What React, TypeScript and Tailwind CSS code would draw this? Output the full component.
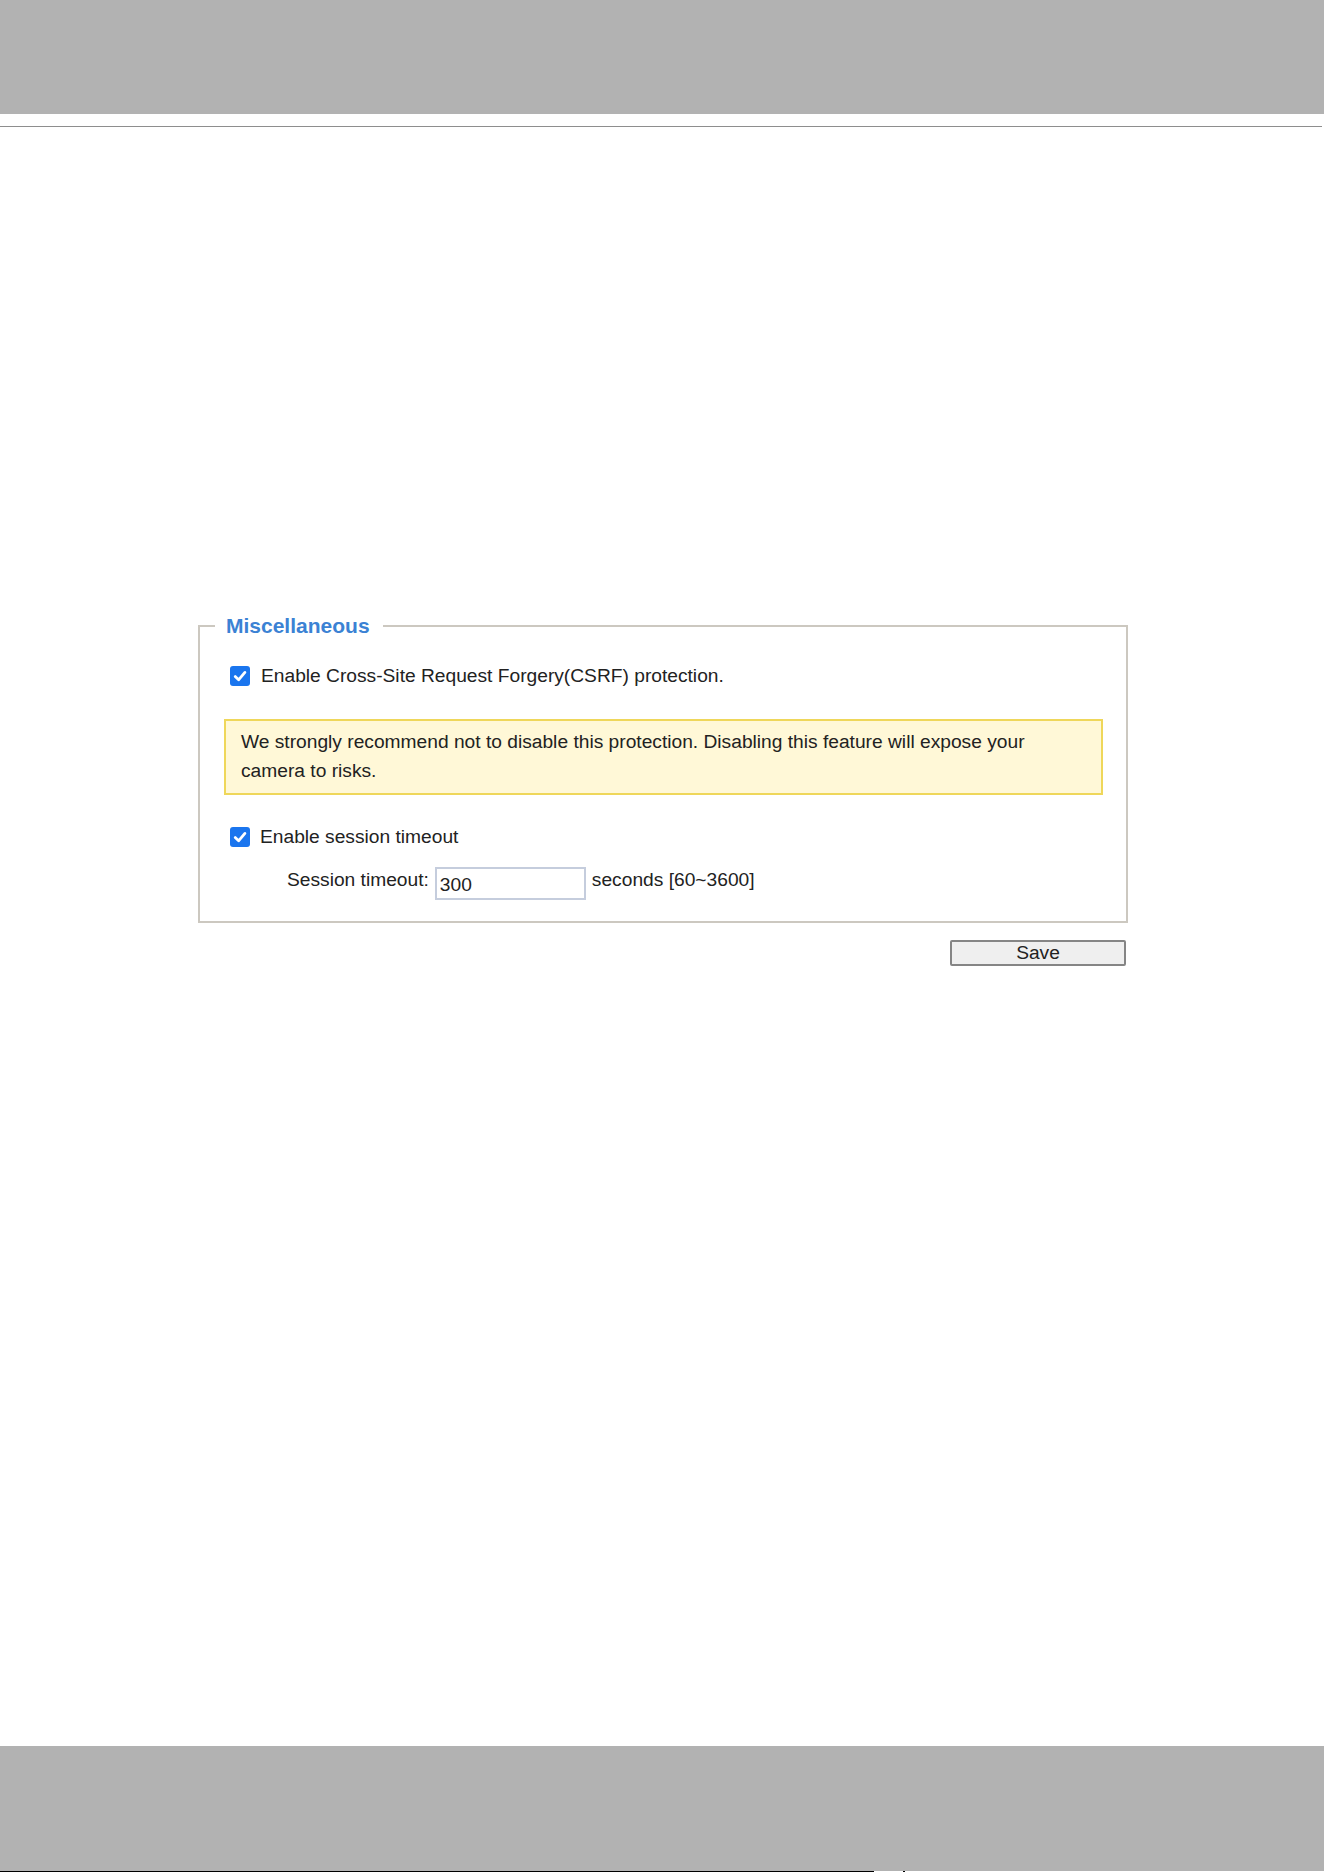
// Miscellaneous security settings page (camera web UI, CSRF + session timeout).

import { useState } from 'react';

function Tick({ checked, onToggle }: { checked: boolean; onToggle: () => void }) {
  return (
    <button
      type="button"
      role="checkbox"
      aria-checked={checked}
      onClick={onToggle}
      className={
        checked
          ? 'flex h-[20px] w-[20px] shrink-0 items-center justify-center rounded-[3px] bg-[#1a75ee]'
          : 'flex h-[20px] w-[20px] shrink-0 items-center justify-center rounded-[3px] border-2 border-[#767676] bg-white'
      }
    >
      {checked && (
        <svg width="16" height="16" viewBox="0 0 16 16" fill="none">
          <path d="M3.2 8.6 6.6 11.8 12.9 4.4" stroke="white" strokeWidth="2.8" strokeLinecap="round" strokeLinejoin="round" />
        </svg>
      )}
    </button>
  );
}

export default function App() {
  const [csrf, setCsrf] = useState(true);
  const [session, setSession] = useState(true);
  const [timeout, setTimeoutValue] = useState('300');

  return (
    <div className="flex h-[1872px] flex-col bg-white font-['Liberation_Sans',Arial,sans-serif] text-[19.2px] text-[#222222]">
      <div className="h-[114px] bg-[#b2b2b2]" />
      <div className="mr-[2px] mt-[12px] h-px bg-[#8e8e8e]" />

      <div className="ml-[198px] mt-[487px] w-[930px]">
        <fieldset className="border-2 border-[#ccc8c0] pb-[21px] pl-[15px] pr-[15px] pt-[27px]">
          <legend className="pl-[11px] pr-[13px] text-[21px] font-bold leading-[24px] text-[#3b82d4]">Miscellaneous</legend>

          <div className="flex items-center gap-[11px] pl-[15px] leading-[22px]">
            <Tick checked={csrf} onToggle={() => setCsrf(!csrf)} />
            <span>Enable Cross-Site Request Forgery(CSRF) protection.</span>
          </div>

          <div className="ml-[9px] mr-[8px] mt-[32px] border-2 border-[#efd75a] bg-[#fff8d7] px-[15px] py-[7px] leading-[28.8px]">
            We strongly recommend not to disable this protection. Disabling this feature will expose your camera to risks.
          </div>

          <div className="mt-[31px] flex items-center gap-[10px] pl-[15px] leading-[22px]">
            <Tick checked={session} onToggle={() => setSession(!session)} />
            <span>Enable session timeout</span>
          </div>

          <div className="mt-[19px] flex items-start gap-[6px] pl-[72px] leading-[22px]">
            <span className="mt-[2px]">Session timeout:</span>
            <input
              value={timeout}
              onChange={(e) => setTimeoutValue(e.target.value.replace(/\D/g, '').slice(0, 4))}
              className="box-border h-[33px] w-[151px] border-2 border-[#c5cddd] bg-white pb-[2px] pl-[3px] pt-[5px] leading-[22px] text-[#222222] outline-none"
            />
            <span className="mt-[2px]">seconds [60~3600]</span>
          </div>
        </fieldset>

        <div className="mt-[17px] flex justify-end pr-[2px]">
          <button className="h-[26px] w-[176px] rounded-[2px] border-2 border-[#858585] bg-[#efefef] leading-[20px] text-[#222222]">
            Save
          </button>
        </div>
      </div>

      <div className="mt-auto h-[125px] bg-[#b2b2b2]" />
      <div className="flex h-px">
        <span className="w-[874px] bg-black" />
        <span className="ml-[29px] w-[2px] bg-black" />
      </div>
    </div>
  );
}
